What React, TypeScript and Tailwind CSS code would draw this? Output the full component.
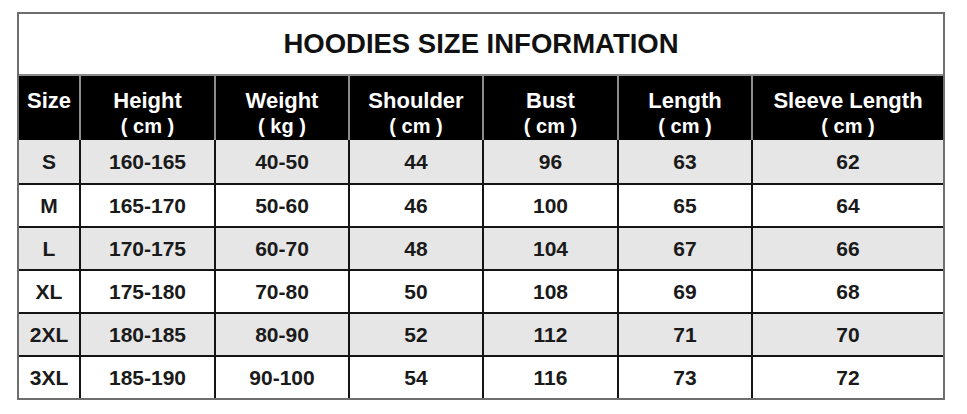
const columns = [
  { label: 'Size', unit: '', width: 'w-[62px]' },
  { label: 'Height', unit: '( cm )', width: 'w-[135px]' },
  { label: 'Weight', unit: '( kg )', width: 'w-[134px]' },
  { label: 'Shoulder', unit: '( cm )', width: 'w-[134px]' },
  { label: 'Bust', unit: '( cm )', width: 'w-[135px]' },
  { label: 'Length', unit: '( cm )', width: 'w-[134px]' },
  { label: 'Sleeve Length', unit: '( cm )', width: 'flex-1' },
];

const rows = [
  ['S', '160-165', '40-50', '44', '96', '63', '62'],
  ['M', '165-170', '50-60', '46', '100', '65', '64'],
  ['L', '170-175', '60-70', '48', '104', '67', '66'],
  ['XL', '175-180', '70-80', '50', '108', '69', '68'],
  ['2XL', '180-185', '80-90', '52', '112', '71', '70'],
  ['3XL', '185-190', '90-100', '54', '116', '73', '72'],
];

export default function App() {
  return (
    <div
      className="w-[967px] h-[414px] bg-white pt-[12px] pl-[17px]"
      style={{ fontFamily: '"Liberation Sans", Arial, sans-serif' }}
    >
      <div className="w-[928px] border-2 border-[#6e6e6e] flex flex-col">
        <div className="h-[62px] flex items-center justify-center border-b-2 border-[#8a8a8a] text-[27.5px] font-bold text-[#111]">
          HOODIES SIZE INFORMATION
        </div>

        <div className="h-[64px] flex bg-black text-white font-bold">
          {columns.map((col, i) => (
            <div
              key={col.label}
              className={`${col.width} flex flex-col items-center justify-center pt-[10px] ${
                i < columns.length - 1 ? 'border-r-2 border-[#8c8c8c]' : ''
              }`}
            >
              <span className="text-[22px] leading-[26px]">{col.label}</span>
              <span className="text-[20px] leading-[24px] h-[24px]">{col.unit}</span>
            </div>
          ))}
        </div>

        {rows.map((row, r) => (
          <div
            key={row[0]}
            className={`h-[43px] flex text-[21px] font-bold text-[#1a1a1a] ${
              r > 0 ? 'border-t-2 border-[#141414]' : ''
            } ${r % 2 === 0 ? 'bg-[#e6e6e6]' : 'bg-white'}`}
          >
            {row.map((cell, i) => (
              <div
                key={i}
                className={`${columns[i].width} flex items-center justify-center ${
                  i < row.length - 1 ? 'border-r-2 border-[#141414]' : ''
                }`}
              >
                {cell}
              </div>
            ))}
          </div>
        ))}
      </div>
    </div>
  );
}
